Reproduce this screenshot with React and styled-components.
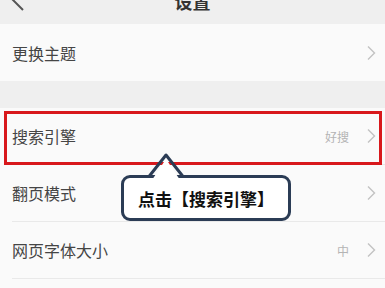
import React from "react";
import styled, { createGlobalStyle } from "styled-components";

const GlobalStyle = createGlobalStyle`
  html, body {
    margin: 0;
    padding: 0;
    background: #efefef;
    font-family: "Noto Sans CJK SC", "Noto Sans", sans-serif;
  }
`;

const Page = styled.div`
  position: relative;
  width: 385px;
  height: 288px;
  overflow: hidden;
  display: flex;
  flex-direction: column;
  background: #efefef;
`;

const Header = styled.div`
  position: relative;
  height: 48px;
  margin-top: -24px;
  flex-shrink: 0;
  display: flex;
  align-items: center;
  justify-content: center;
  background: #efefef;
`;

const Back = styled.svg`
  position: absolute;
  left: 8px;
  top: 12px;
`;

const Title = styled.div`
  font-size: 18px;
  font-weight: 700;
  color: #333;
  line-height: 1;
  margin-top: 2px;
`;

const Section = styled.div`
  background: #fafafa;
  margin-top: ${(p) => p.$gap || 0}px;
  flex: ${(p) => (p.$grow ? 1 : "none")};
  display: flex;
  flex-direction: column;
`;

const Row = styled.div`
  position: relative;
  height: 57px;
  padding-left: 12px;
  display: flex;

  ${(p) =>
    p.$highlight &&
    `
    &::after {
      content: "";
      position: absolute;
      top: 3px;
      left: 4px;
      right: 3px;
      bottom: 0;
      border: 3px solid #d8181c;
    }
  `}
`;

const RowInner = styled.div`
  flex: 1;
  display: flex;
  align-items: center;
  justify-content: space-between;
  padding-right: 9px;
  border-bottom: ${(p) => (p.$last ? "none" : "1px solid #e9e9e9")};
`;

const Label = styled.span`
  font-size: 16px;
  color: #454545;
`;

const Right = styled.div`
  display: flex;
  align-items: center;
  gap: 17px;
`;

const Value = styled.span`
  font-size: 12px;
  color: #b4b4b4;
`;

const Bubble = styled.div`
  position: absolute;
  left: 121px;
  top: 175px;
  width: 170px;
  height: 46px;
  box-sizing: border-box;
  border: 3px solid #2b3c55;
  border-radius: 9px;
  background: #fff;
  display: flex;
  align-items: center;
  justify-content: center;
  font-size: 17px;
  font-weight: 700;
  color: #111;
  letter-spacing: 0px;
`;

const Pointer = styled.svg`
  position: absolute;
  left: 25px;
  top: -25px;
  overflow: visible;
`;

const Chevron = () => (
  <svg width="10" height="16" viewBox="0 0 10 16">
    <polyline
      points="2,1.5 8.5,8 2,14.5"
      fill="none"
      stroke="#c2c2c2"
      strokeWidth="1.4"
    />
  </svg>
);

const SettingRow = ({ label, value, last, highlight }) => (
  <Row $highlight={highlight}>
    <RowInner $last={last}>
      <Label>{label}</Label>
      <Right>
        {value && <Value>{value}</Value>}
        <Chevron />
      </Right>
    </RowInner>
  </Row>
);

export default function App() {
  return (
    <>
      <GlobalStyle />
      <Page>
        <Header>
          <Back width="20" height="24" viewBox="0 0 20 24">
            <polyline
              points="15,-2 3,10 15,22"
              fill="none"
              stroke="#555"
              strokeWidth="2"
            />
          </Back>
          <Title>设置</Title>
        </Header>

        <Section>
          <SettingRow label="更换主题" last />
        </Section>

        <Section $gap={27} $grow>
          <SettingRow label="搜索引擎" value="好搜" highlight />
          <SettingRow label="翻页模式" />
          <SettingRow label="网页字体大小" value="中" />
          <SettingRow label="" last />
        </Section>

        <Bubble>
          <Pointer width="34" height="25" viewBox="0 0 34 25">
            <polygon points="3,27 17,6 31,27" fill="#fff" />
            <polyline
              points="0,23.5 17,2 34,23.5"
              fill="none"
              stroke="#2b3c55"
              strokeWidth="3"
              strokeLinejoin="round"
            />
          </Pointer>
          点击【搜索引擎】
        </Bubble>
      </Page>
    </>
  );
}
